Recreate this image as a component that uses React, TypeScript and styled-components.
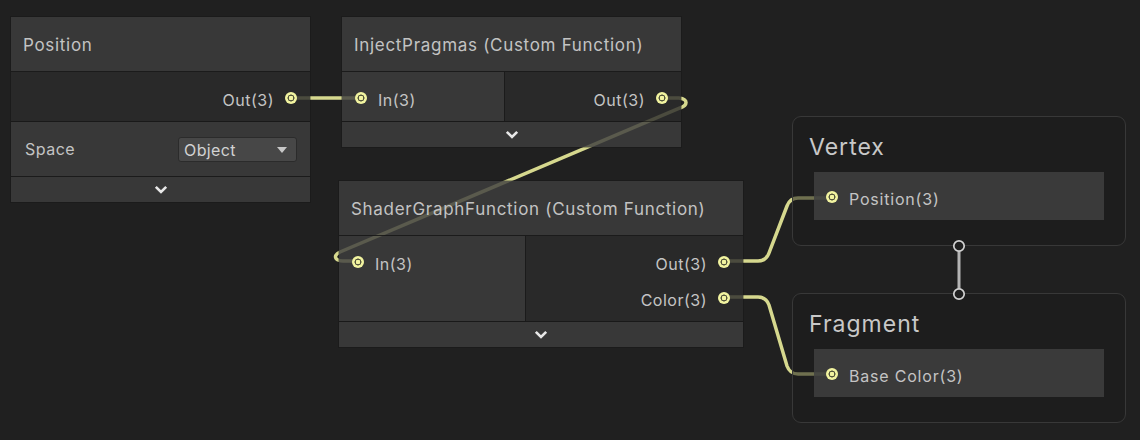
import React from "react";
import styled, { createGlobalStyle } from "styled-components";

const GlobalStyle = createGlobalStyle`
  * { box-sizing: border-box; }
  html, body { margin: 0; padding: 0; background: #202020; }
  body { font-family: Inter, "Noto Sans", "Liberation Sans", sans-serif; }
`;

// node colours are slightly see-through so wires behind them show dimmed
const LIGHT = "rgba(62, 62, 62, 0.82)";
const DARK = "rgba(44, 44, 44, 0.82)";
const LINE = "rgba(24, 24, 24, 0.9)";
const WIRE = "#d6d88e";

const Canvas = styled.div`
  position: relative;
  width: 1140px;
  height: 440px;
  overflow: hidden;
  background: #202020;
`;

const WireLayer = styled.svg<{ $over?: boolean }>`
  position: absolute;
  left: 0;
  top: 0;
  width: 1140px;
  height: 440px;
  pointer-events: none;
  z-index: ${(p) => (p.$over ? 3 : 0)};
`;

const Node = styled.div<{ $x: number; $y: number; $w: number }>`
  position: absolute;
  left: ${(p) => p.$x}px;
  top: ${(p) => p.$y}px;
  width: ${(p) => p.$w}px;
  z-index: 1;
  display: flex;
  flex-direction: column;
  box-shadow: 0 0 0 1px rgba(16, 16, 16, 0.3);
`;

const Header = styled.div`
  height: 55px;
  display: flex;
  align-items: center;
  padding: 2px 12px 0;
  background: ${LIGHT};
  border-bottom: 1px solid ${LINE};
  color: #c3c3c3;
  font-size: 17px;
  letter-spacing: 0.7px;
  white-space: nowrap;
`;

const Body = styled.div`
  display: flex;
  border-bottom: 1px solid ${LINE};
`;

const Column = styled.div<{ $w?: number; $dark?: boolean; $divider?: boolean }>`
  flex: ${(p) => (p.$w ? `0 0 ${p.$w}px` : "1 1 auto")};
  display: flex;
  flex-direction: column;
  padding: 8px 0 5px;
  background: ${(p) => (p.$dark ? DARK : LIGHT)};
  border-right: ${(p) => (p.$divider ? `1px solid ${LINE}` : "none")};
`;

const PortRow = styled.div<{ $out?: boolean }>`
  height: 36px;
  display: flex;
  align-items: center;
  justify-content: ${(p) => (p.$out ? "flex-end" : "flex-start")};
  gap: 11px;
  padding: 0 13px;
  color: #c4c4c4;
  font-size: 16px;
  letter-spacing: 0.5px;
  white-space: nowrap;
`;

const Label = styled.span`
  padding-top: 3px;
`;

const Port = styled.span`
  flex: 0 0 12px;
  width: 12px;
  height: 12px;
  border-radius: 50%;
  background: radial-gradient(
    circle closest-side,
    #f2f4a0 0 34%,
    #55563c 41% 55%,
    #f2f4a0 62%
  );
`;

const PropertyRow = styled.div`
  height: 55px;
  display: flex;
  align-items: center;
  justify-content: space-between;
  padding: 0 13px 0 14px;
  background: ${LIGHT};
  border-bottom: 1px solid ${LINE};
  color: #c4c4c4;
  font-size: 16px;
  letter-spacing: 0.5px;
`;

const Dropdown = styled.div`
  width: 119px;
  height: 25px;
  display: flex;
  align-items: center;
  justify-content: space-between;
  padding: 1px 9px 0 5px;
  background: #474747;
  border: 1px solid #2b2b2b;
  border-radius: 3px;
  color: #d2d2d2;
  font-size: 16px;
  letter-spacing: 0.4px;
`;

const Caret = styled.span`
  width: 0;
  height: 0;
  border-left: 5px solid transparent;
  border-right: 5px solid transparent;
  border-top: 6px solid #c8c8c8;
`;

const Footer = styled.div`
  height: 25px;
  display: flex;
  align-items: center;
  justify-content: center;
  background: ${LIGHT};
`;

const Stack = styled.div<{ $x: number; $y: number }>`
  position: absolute;
  left: ${(p) => p.$x}px;
  top: ${(p) => p.$y}px;
  width: 334px;
  height: 130px;
  z-index: 1;
  padding: 0 16px;
  background: rgba(28, 28, 28, 0.55);
  border: 1.5px solid #383838;
  border-radius: 9px;
`;

const StackTitle = styled.div`
  height: 55px;
  padding-top: 4px;
  display: flex;
  align-items: center;
  color: #c8c8c8;
  font-size: 23px;
  letter-spacing: 1px;
`;

const Slot = styled.div`
  height: 48px;
  margin: 0 5px;
  display: flex;
  align-items: center;
  gap: 11px;
  padding: 2px 0 0 12px;
  background: rgba(63, 63, 63, 0.85);
  color: #c4c4c4;
  font-size: 16px;
  letter-spacing: 0.8px;
`;

const Chevron = () => (
  <svg width="14" height="9" viewBox="0 0 14 9">
    <path d="M1.8 1.8 L7 7 L12.2 1.8" fill="none" stroke="#e8e8e8" strokeWidth="2.6" />
  </svg>
);

const Input = ({ label }: { label: string }) => (
  <PortRow>
    <Port />
    <Label>{label}</Label>
  </PortRow>
);

const Output = ({ label }: { label: string }) => (
  <PortRow $out>
    <Label>{label}</Label>
    <Port />
  </PortRow>
);

const wires = [
  "M291 98 L360 98",
  "M663 98 L679 98 Q686 99 686 102.5 Q686 106 680 108 L340 252 Q334 255 336 258.5 Q338 261 343 261 L357 261",
  "M724 261 L758 261 Q766 261 769 253 L787 206 Q790 198 798 198 L832 198",
  "M724 297 L758 297 Q766 297 769 305 L787 366 Q790 374 798 374 L832 374",
];

export default function App() {
  return (
    <>
      <GlobalStyle />
      <Canvas>
        <WireLayer viewBox="0 0 1140 440">
          {wires.map((d) => (
            <path key={d} d={d} fill="none" stroke={WIRE} strokeWidth="3.5" />
          ))}
        </WireLayer>

        <Node $x={11} $y={17} $w={299}>
          <Header>Position</Header>
          <Body>
            <Column $dark>
              <Output label="Out(3)" />
            </Column>
          </Body>
          <PropertyRow>
            Space
            <Dropdown>
              Object
              <Caret />
            </Dropdown>
          </PropertyRow>
          <Footer>
            <Chevron />
          </Footer>
        </Node>

        <Node $x={342} $y={17} $w={339}>
          <Header>InjectPragmas (Custom Function)</Header>
          <Body>
            <Column $w={163} $divider>
              <Input label="In(3)" />
            </Column>
            <Column $dark>
              <Output label="Out(3)" />
            </Column>
          </Body>
          <Footer>
            <Chevron />
          </Footer>
        </Node>

        <Node $x={339} $y={181} $w={404}>
          <Header>ShaderGraphFunction (Custom Function)</Header>
          <Body>
            <Column $w={187} $divider>
              <Input label="In(3)" />
            </Column>
            <Column $dark>
              <Output label="Out(3)" />
              <Output label="Color(3)" />
            </Column>
          </Body>
          <Footer>
            <Chevron />
          </Footer>
        </Node>

        <Stack $x={792} $y={116}>
          <StackTitle>Vertex</StackTitle>
          <Slot>
            <Port />
            <Label>Position(3)</Label>
          </Slot>
        </Stack>

        <Stack $x={792} $y={293}>
          <StackTitle>Fragment</StackTitle>
          <Slot>
            <Port />
            <Label>Base Color(3)</Label>
          </Slot>
        </Stack>

        <WireLayer $over viewBox="0 0 1140 440">
          <line x1="959" y1="246" x2="959" y2="294" stroke="#b4b4b4" strokeWidth="3" />
          <circle cx="959" cy="246" r="5.2" fill="#1f1f1f" stroke="#d2d2d2" strokeWidth="1.7" />
          <circle cx="959" cy="294" r="5.2" fill="#1f1f1f" stroke="#d2d2d2" strokeWidth="1.7" />
        </WireLayer>
      </Canvas>
    </>
  );
}
